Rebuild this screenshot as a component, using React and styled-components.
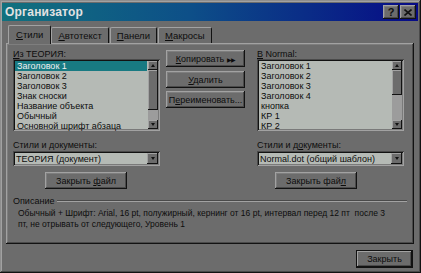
import React from 'react'
import styled, { createGlobalStyle } from 'styled-components'

const face = '#6c6c6c'
const light = '#a2a2a2'
const mid = '#4a4a4a'
const dark = '#121212'
const listBg = '#b5bab5'
const selBg = '#187a82'

const raised = `inset -1px -1px ${dark}, inset 1px 1px ${light}, inset -2px -2px ${mid}, inset 2px 2px #7e7e7e`
const sunken = `inset 1px 1px ${mid}, inset -1px -1px ${light}, inset 2px 2px ${dark}, inset -2px -2px #7a7a7a`

const Global = createGlobalStyle`
  html, body { margin: 0; padding: 0; background: ${face}; }
  * { box-sizing: border-box; }
`

const Window = styled.div`
  width: 421px;
  height: 273px;
  background: ${face};
  padding: 3px 3px 0 2px;
  display: flex;
  flex-direction: column;
  box-shadow: inset -1px -1px ${dark}, inset 1px 1px #8e8e8e, inset -2px -2px ${mid}, inset 2px 2px ${light};
  font-family: "Liberation Sans", Arial, sans-serif;
  font-size: 9px;
  color: #0c0c0c;
  overflow: hidden;
`

const TitleBar = styled.div`
  height: 18px;
  display: flex;
  align-items: center;
  padding: 0 2px 0 3px;
  background: linear-gradient(90deg, #11717e 0%, #0d4f88 45%, #070b86 100%);
`

const Title = styled.div`
  flex: 1;
  color: #e2e2e2;
  font-weight: bold;
  font-size: 12px;
  letter-spacing: 0.2px;
`

const TitleButton = styled.div`
  width: 16px;
  height: 14px;
  margin-left: ${p => p.$gap || 0}px;
  background: ${face};
  box-shadow: ${raised};
  display: flex;
  align-items: center;
  justify-content: center;
  font-weight: bold;
  font-size: 11px;
  color: ${dark};
`

const Body = styled.div`
  flex: 1;
  display: flex;
  flex-direction: column;
  padding: 4px 4px 0 4px;
`

const Tabs = styled.div`
  display: flex;
  align-items: flex-end;
  padding-left: 2px;
  height: 18px;
  position: relative;
  z-index: 1;
`

const Tab = styled.div`
  height: ${p => (p.$active ? 19 : 16)}px;
  padding: 0 ${p => (p.$active ? 7 : 6)}px;
  margin-right: ${p => (p.$active ? 0 : 1)}px;
  margin-bottom: ${p => (p.$active ? -1 : 0)}px;
  display: flex;
  align-items: center;
  padding-bottom: ${p => (p.$active ? 2 : 0)}px;
  background: ${face};
  border-top: 1px solid ${light};
  border-left: 1px solid ${light};
  border-right: 1px solid ${dark};
  border-radius: 2px 2px 0 0;
  font-size: 9.5px;
`

const Panel = styled.div`
  height: 201px;
  background: ${face};
  box-shadow: ${raised};
  padding: 6px 10px 0 7px;
  display: flex;
  flex-direction: column;
`

const Columns = styled.div`
  display: flex;
`

const Column = styled.div`
  width: ${p => p.$width}px;
  margin-left: ${p => p.$gap || 0}px;
  display: flex;
  flex-direction: column;
  align-items: stretch;
`

const Label = styled.div`
  height: 10px;
  line-height: 10px;
  margin-top: ${p => p.$top || 0}px;
  white-space: nowrap;
`

const List = styled.div`
  height: 72px;
  background: ${listBg};
  box-shadow: ${sunken};
  padding: 2px;
  display: flex;
`

const Items = styled.div`
  flex: 1;
  padding-right: 1px;
`

const Item = styled.div`
  height: 10px;
  line-height: 10px;
  padding-left: 2px;
  font-size: 9px;
  white-space: nowrap;
  overflow: hidden;
  background: ${p => (p.$selected ? selBg : 'transparent')};
  color: ${p => (p.$selected ? '#f0f0f0' : '#0c0c0c')};
`

const Scrollbar = styled.div`
  width: 10px;
  display: flex;
  flex-direction: column;
  background: #9c9c9c;
`

const ArrowBox = styled.div`
  height: ${p => p.$h || 9}px;
  width: ${p => p.$w || 10}px;
  flex: none;
  background: ${face};
  box-shadow: inset -1px -1px ${dark}, inset 1px 1px ${light};
  display: flex;
  align-items: center;
  justify-content: center;
`

const Thumb = styled.div`
  height: ${p => p.$h}px;
  background: ${face};
  box-shadow: inset -1px -1px ${dark}, inset 1px 1px ${light};
`

const Track = styled.div`
  flex: 1;
`

const Tri = styled.span`
  width: 0;
  height: 0;
  border-left: 2.5px solid transparent;
  border-right: 2.5px solid transparent;
  ${p => (p.$up ? `border-bottom: 3px solid ${dark};` : `border-top: 3px solid ${dark};`)}
`

const Button = styled.div`
  height: ${p => p.$h || 17}px;
  width: ${p => (p.$w ? `${p.$w}px` : 'auto')};
  margin-top: ${p => p.$top || 0}px;
  margin-left: ${p => p.$left || 0}px;
  background: ${face};
  box-shadow: ${p => (p.$default ? `inset 0 0 0 1px ${dark}, inset -2px -2px ${dark}, inset 2px 2px ${light}, inset -3px -3px ${mid}` : raised)};
  display: flex;
  align-items: center;
  justify-content: center;
  white-space: nowrap;
  font-size: 9px;
`

const Combo = styled.div`
  height: 15px;
  margin-top: 1px;
  background: ${listBg};
  box-shadow: ${sunken};
  padding: 2px;
  display: flex;
  align-items: center;
`

const ComboText = styled.div`
  flex: 1;
  padding-left: 1px;
  font-size: 9px;
  white-space: nowrap;
`

const Section = styled.div`
  margin-top: 8px;
  display: flex;
  flex-direction: column;
`

const SectionHead = styled.div`
  display: flex;
  align-items: center;
  height: 8px;
  margin-right: -3px;
`

const Rule = styled.div`
  flex: 1;
  margin-left: 3px;
  border-top: 1px solid ${mid};
  border-bottom: 1px solid ${light};
`

const Description = styled.div`
  padding: 3px 8px 0 5px;
  line-height: 11px;
  font-size: 8.5px;
`

const Footer = styled.div`
  display: flex;
  justify-content: flex-end;
  padding: 6px 1px 0 0;
`

const U = styled.span`
  text-decoration: underline;
`

const Arrows = styled.span`
  font-size: 6px;
  margin-left: 3px;
  letter-spacing: -1px;
`

const leftItems = ['Заголовок 1', 'Заголовок 2', 'Заголовок 3', 'Знак сноски', 'Название объекта', 'Обычный', 'Основной шрифт абзаца']
const rightItems = ['Заголовок 1', 'Заголовок 2', 'Заголовок 3', 'Заголовок 4', 'кнопка', 'КР 1', 'КР 2']

const ListBox = ({ items, selected, thumb }) => (
  <List>
    <Items>
      {items.map((t, i) => (
        <Item key={i} $selected={i === selected}>{t}</Item>
      ))}
    </Items>
    <Scrollbar>
      <ArrowBox><Tri $up /></ArrowBox>
      <Thumb $h={thumb} />
      <Track />
      <ArrowBox><Tri /></ArrowBox>
    </Scrollbar>
  </List>
)

const DropDown = ({ text }) => (
  <Combo>
    <ComboText>{text}</ComboText>
    <ArrowBox $h={11} $w={11}><Tri /></ArrowBox>
  </Combo>
)

export default function App() {
  return (
    <>
      <Global />
      <Window>
        <TitleBar>
          <Title>Организатор</Title>
          <TitleButton>?</TitleButton>
          <TitleButton $gap={1}>
            <svg width="8" height="7" viewBox="0 0 8 7">
              <path d="M0.5 0.5 L7.5 6.5 M7.5 0.5 L0.5 6.5" stroke={dark} strokeWidth="1.6" />
            </svg>
          </TitleButton>
        </TitleBar>
        <Body>
          <Tabs>
            <Tab $active><span><U>С</U>тили</span></Tab>
            <Tab><span><U>А</U>втотекст</span></Tab>
            <Tab><span><U>П</U>анели</span></Tab>
            <Tab><span><U>М</U>акросы</span></Tab>
          </Tabs>
          <Panel>
            <Columns>
              <Column $width={147}>
                <Label><U>И</U>з ТЕОРИЯ:</Label>
                <ListBox items={leftItems} selected={0} thumb={40} />
                <Label $top={9}>Стили и <U>д</U>окументы:</Label>
                <DropDown text="ТЕОРИЯ (документ)" />
                <Button $w={82} $top={6} $left={32}><span>Закрыть <U>ф</U>айл</span></Button>
              </Column>
              <Column $width={79} $gap={6}>
                <Button $top={1}><span><U>К</U>опировать<Arrows>▶▶</Arrows></span></Button>
                <Button $top={4}><span><U>У</U>далить</span></Button>
                <Button $top={3}><span>П<U>е</U>реименовать...</span></Button>
              </Column>
              <Column $width={147} $gap={12}>
                <Label><U>В</U> Normal:</Label>
                <ListBox items={rightItems} selected={-1} thumb={25} />
                <Label $top={9}>Стили и д<U>о</U>кументы:</Label>
                <DropDown text="Normal.dot (общий шаблон)" />
                <Button $w={82} $top={6} $left={18}><span>Закрыть фай<U>л</U></span></Button>
              </Column>
            </Columns>
            <Section>
              <SectionHead>
                <span>Описание</span>
                <Rule />
              </SectionHead>
              <Description>
                Обычный + Шрифт: Arial, 16 pt, полужирный, кернинг от 16 pt, интервал перед 12 пт&nbsp; после 3 пт, не отрывать от следующего, Уровень 1
              </Description>
            </Section>
          </Panel>
          <Footer>
            <Button $w={57} $h={18} $default>Закрыть</Button>
          </Footer>
        </Body>
      </Window>
    </>
  )
}
